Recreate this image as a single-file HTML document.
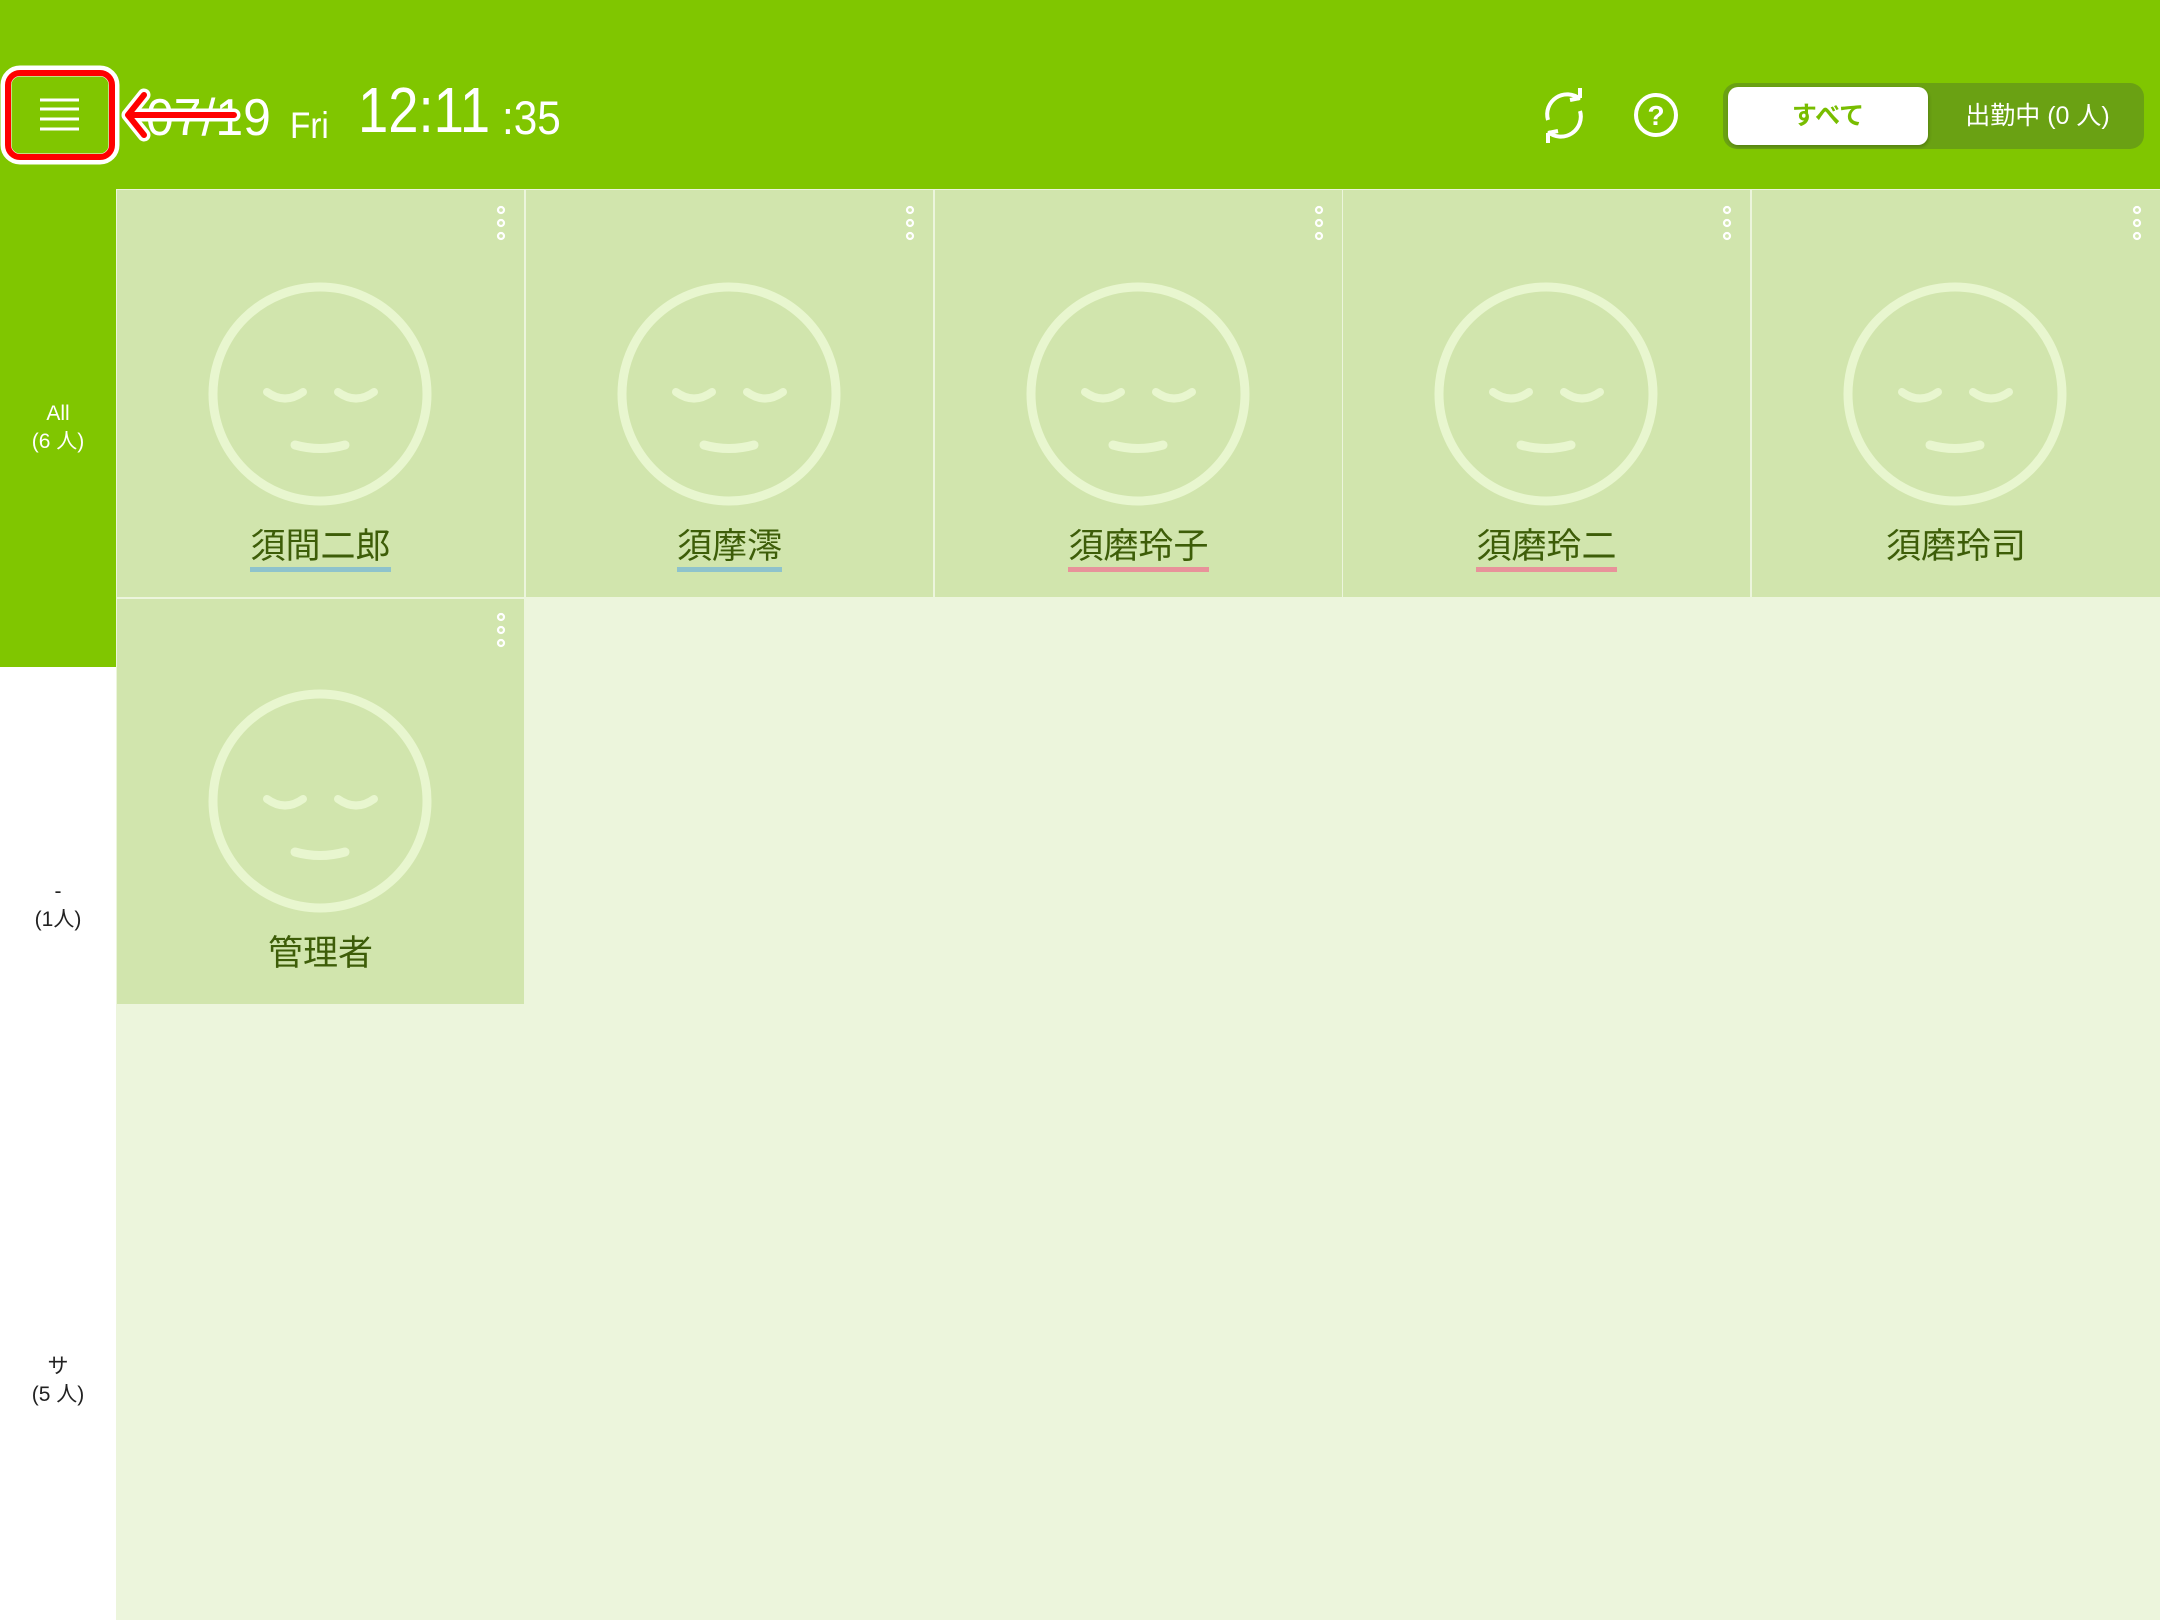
<!DOCTYPE html>
<html><head><meta charset="utf-8"><style>
*{margin:0;padding:0;box-sizing:border-box}
body{width:2160px;height:1620px;overflow:hidden;background:#ecf5dc;position:relative;font-family:"Liberation Sans","Noto Sans CJK JP",sans-serif}
.hdr{position:absolute;left:0;top:0;width:2160px;height:189px;background:#80c600}
.side{position:absolute;left:0;top:189px;width:116px;height:1431px;background:#fff}
.sideg{position:absolute;left:0;top:189px;width:116px;height:478px;background:#80c600}
.lab{position:absolute;left:0;width:116px;text-align:center;font-size:21px;line-height:28px}
.card{position:absolute;width:407px;height:407px;background:#d1e5ad}
.card svg{position:absolute;left:0;top:0}
.nm{position:absolute;left:0;width:100%;top:337px;text-align:center;font-size:35px;color:#3d5d08;line-height:40px}
.nm span{display:inline-block;border-bottom:5px solid transparent}
.t{position:absolute;color:#fff;white-space:nowrap;transform-origin:0 0}
</style></head><body>
<div class="hdr"></div>
<div class="side"></div>
<div class="sideg"></div>
<div class="lab" style="top:400px;color:#fff">All<br>(6 人)</div>
<div class="lab" style="top:878px;color:#222">-<br>(1人)</div>
<div class="lab" style="top:1353px;color:#222">サ<br>(5 人)</div>

<div class="t" style="left:146px;top:88px;font-size:52px;line-height:60px;transform:scaleX(0.96)">07/19</div>
<div class="t" style="left:290px;top:104px;font-size:37px;line-height:44px;transform:scaleX(0.9)">Fri</div>
<div class="t" style="left:358px;top:74px;font-size:64px;line-height:72px;transform:scaleX(0.85)">12:11</div>
<div class="t" style="left:502px;top:90px;font-size:47px;line-height:56px;transform:scaleX(0.9)">:35</div>

<svg style="position:absolute;left:0;top:60px" width="260" height="110">
<rect x="6" y="11" width="108" height="88" rx="14" fill="none" stroke="#fff" stroke-width="11"/>
<rect x="8" y="13" width="104" height="84" rx="12" fill="none" stroke="#f00" stroke-width="6"/>
<g stroke="#fff" stroke-width="3"><line x1="40" y1="40" x2="79" y2="40"/><line x1="40" y1="49" x2="79" y2="49"/><line x1="40" y1="59" x2="79" y2="59"/><line x1="40" y1="69" x2="79" y2="69"/></g>
<g fill="none" stroke-linecap="round" stroke-linejoin="round">
<path d="M234 55 H128 M144 35 L128 55 L144 75" stroke="#fff" stroke-width="13"/>
<path d="M234 55 H128 M144 35 L128 55 L144 75" stroke="#f00" stroke-width="6"/>
</g>
</svg>

<svg style="position:absolute;left:1530px;top:80px" width="160" height="70">
<g fill="none" stroke="#fff" stroke-width="4">
<path d="M18 40 A20 20 0 0 1 50 19"/>
<path d="M50 18 L50 8 M50 18 L40 20"/>
<path d="M50 31 A20 20 0 0 1 18 52"/>
<path d="M18 53 L18 63 M18 53 L28 51"/>
<circle cx="126" cy="35" r="20"/>
</g>
<text x="126" y="45" text-anchor="middle" font-family="Liberation Sans" font-weight="bold" font-size="28" fill="#fff">?</text>
</svg>

<div style="position:absolute;left:1723px;top:83px;width:421px;height:66px;border-radius:14px;background:#6aa113"></div>
<div style="position:absolute;left:1728px;top:87px;width:200px;height:58px;border-radius:10px;background:#fff;box-shadow:1px 2px 3px rgba(0,0,0,.2);text-align:center;font-size:25px;line-height:58px;color:#78bd00;font-weight:bold">すべて</div>
<div class="t" style="left:1935px;top:87px;width:205px;text-align:center;font-size:25px;line-height:58px">出勤中 (0 人)</div>

<div class="card" style="left:117px;top:190px"><svg width="407" height="407"><g fill="none" stroke="#fff" stroke-width="2.2"><circle cx="384" cy="20" r="3"/><circle cx="384" cy="33" r="3"/><circle cx="384" cy="46" r="3"/></g><g fill="none" stroke="#e8f6cf" stroke-linecap="round"><circle cx="203" cy="204" r="107" stroke-width="9"/><path d="M150 202 Q168 215 186 202 M221 202 Q239 215 257 202" stroke-width="8"/><path d="M178 255 Q203 262 228 255" stroke-width="9"/></g></svg><div class="nm"><span style="border-color:#8ec3cc">須間二郎</span></div></div>
<div class="card" style="left:526px;top:190px"><svg width="407" height="407"><g fill="none" stroke="#fff" stroke-width="2.2"><circle cx="384" cy="20" r="3"/><circle cx="384" cy="33" r="3"/><circle cx="384" cy="46" r="3"/></g><g fill="none" stroke="#e8f6cf" stroke-linecap="round"><circle cx="203" cy="204" r="107" stroke-width="9"/><path d="M150 202 Q168 215 186 202 M221 202 Q239 215 257 202" stroke-width="8"/><path d="M178 255 Q203 262 228 255" stroke-width="9"/></g></svg><div class="nm"><span style="border-color:#8ec3cc">須摩澪</span></div></div>
<div class="card" style="left:935px;top:190px"><svg width="407" height="407"><g fill="none" stroke="#fff" stroke-width="2.2"><circle cx="384" cy="20" r="3"/><circle cx="384" cy="33" r="3"/><circle cx="384" cy="46" r="3"/></g><g fill="none" stroke="#e8f6cf" stroke-linecap="round"><circle cx="203" cy="204" r="107" stroke-width="9"/><path d="M150 202 Q168 215 186 202 M221 202 Q239 215 257 202" stroke-width="8"/><path d="M178 255 Q203 262 228 255" stroke-width="9"/></g></svg><div class="nm"><span style="border-color:#e8929a">須磨玲子</span></div></div>
<div class="card" style="left:1343px;top:190px"><svg width="407" height="407"><g fill="none" stroke="#fff" stroke-width="2.2"><circle cx="384" cy="20" r="3"/><circle cx="384" cy="33" r="3"/><circle cx="384" cy="46" r="3"/></g><g fill="none" stroke="#e8f6cf" stroke-linecap="round"><circle cx="203" cy="204" r="107" stroke-width="9"/><path d="M150 202 Q168 215 186 202 M221 202 Q239 215 257 202" stroke-width="8"/><path d="M178 255 Q203 262 228 255" stroke-width="9"/></g></svg><div class="nm"><span style="border-color:#e8929a">須磨玲二</span></div></div>
<div class="card" style="left:1752px;top:190px;width:408px"><svg width="407" height="407"><g fill="none" stroke="#fff" stroke-width="2.2"><circle cx="385" cy="20" r="3"/><circle cx="385" cy="33" r="3"/><circle cx="385" cy="46" r="3"/></g><g fill="none" stroke="#e8f6cf" stroke-linecap="round"><circle cx="203" cy="204" r="107" stroke-width="9"/><path d="M150 202 Q168 215 186 202 M221 202 Q239 215 257 202" stroke-width="8"/><path d="M178 255 Q203 262 228 255" stroke-width="9"/></g></svg><div class="nm"><span>須磨玲司</span></div></div>
<div class="card" style="left:117px;top:599px;height:405px"><svg width="407" height="405"><g fill="none" stroke="#fff" stroke-width="2.2"><circle cx="384" cy="18" r="3"/><circle cx="384" cy="31" r="3"/><circle cx="384" cy="44" r="3"/></g><g fill="none" stroke="#e8f6cf" stroke-linecap="round"><circle cx="203" cy="202" r="107" stroke-width="9"/><path d="M150 200 Q168 213 186 200 M221 200 Q239 213 257 200" stroke-width="8"/><path d="M178 253 Q203 260 228 253" stroke-width="9"/></g></svg><div class="nm" style="top:335px"><span>管理者</span></div></div>
</body></html>
